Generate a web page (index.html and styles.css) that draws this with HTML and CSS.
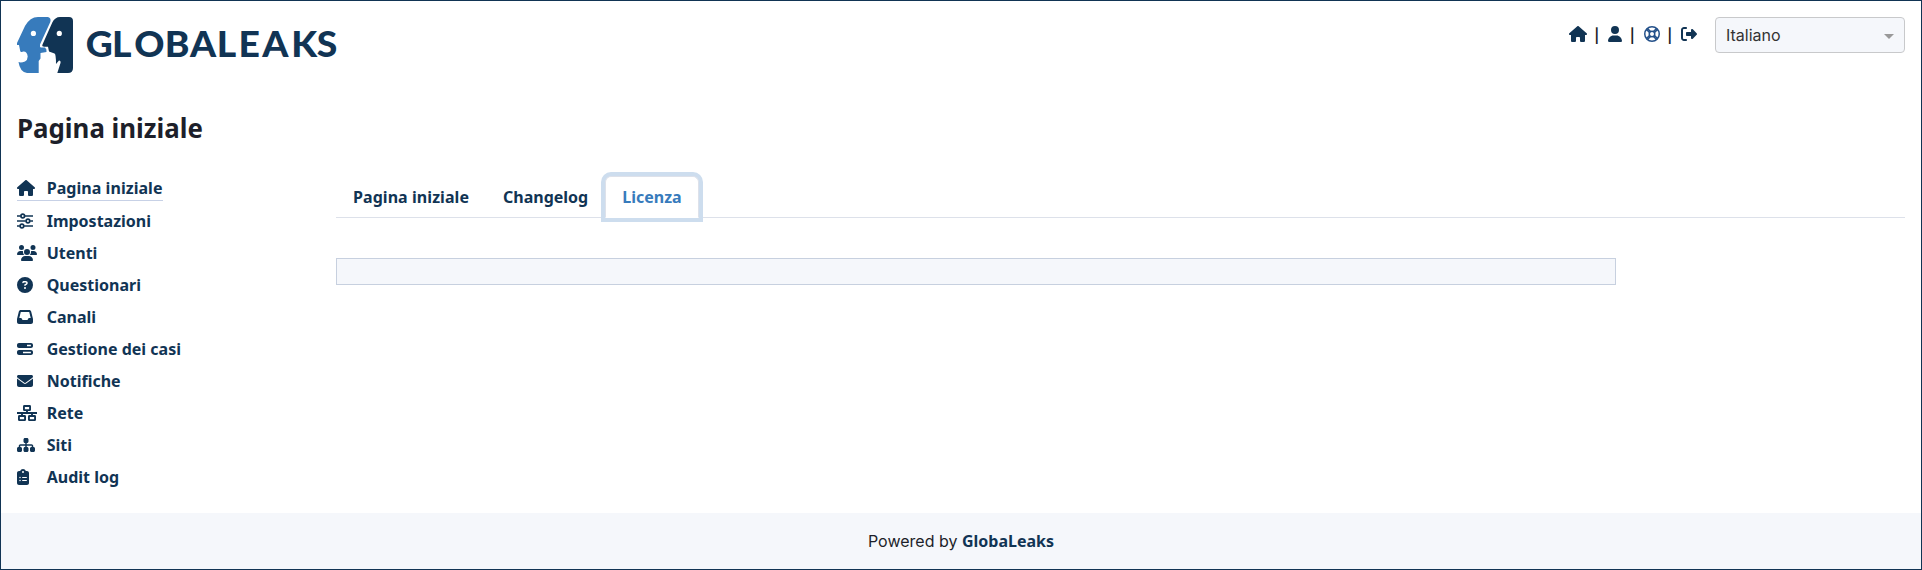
FILE: index.html
```html
<!DOCTYPE html>
<html lang="it">
<head>
<meta charset="utf-8">
<title>GlobaLeaks</title>
<link rel="stylesheet" href="styles.css">
</head>
<body>
<svg width="0" height="0" class="defs">
  <symbol id="house" viewBox="0 0 576 512"><path d="M575.8 255.5c0 18-15 32.1-32 32.1h-32l.7 160.2c0 2.700-.2 5.400-.5 8.100V472c0 22.100-17.900 40-40 40H456c-1.100 0-2.200 0-3.300-.1c-1.400 .1-2.800 .1-4.200 .1H416 392c-22.100 0-40-17.900-40-40V448 384c0-17.700-14.300-32-32-32H256c-17.700 0-32 14.300-32 32v64 24c0 22.100-17.900 40-40 40H160 128.100c-1.500 0-3-.1-4.500-.2c-1.200 .1-2.400 .2-3.600 .2H104c-22.100 0-40-17.900-40-40V360c0-.9 0-1.900 .1-2.800V287.600H32c-18 0-32-14-32-32.100c0-9 3-17 10-24L266.400 8c7-7 15-8 22-8s15 2 21 7L564.800 231.500c8 7 12 15 11 24z"/></symbol>
  <symbol id="user" viewBox="0 0 448 512"><path d="M224 256A128 128 0 1 0 224 0a128 128 0 1 0 0 256zm-45.700 48C79.800 304 0 383.800 0 482.300C0 498.700 13.300 512 29.700 512H418.300c16.400 0 29.700-13.300 29.700-29.700C448 383.800 368.200 304 269.700 304H178.300z"/></symbol>
  <symbol id="ring" viewBox="0 0 512 512"><g fill="none" stroke="currentColor" stroke-width="48"><circle cx="256" cy="256" r="232"/><circle cx="256" cy="256" r="88"/><path stroke-width="44" d="M78 112l106 106M112 78l106 106M400 78L294 184M434 112L328 218M78 400l106-106M112 434l106-106M400 434L294 328M434 400L328 294"/></g></symbol>
  <symbol id="logout" viewBox="0 0 512 512"><path d="M377.900 105.900L500.700 228.700c7.200 7.200 11.300 17.100 11.300 27.300s-4.100 20.100-11.300 27.300L377.900 406.100c-6.400 6.400-15 9.900-24 9.900c-18.700 0-33.900-15.200-33.900-33.900l0-62.100-128 0c-17.700 0-32-14.300-32-32l0-64c0-17.700 14.300-32 32-32l128 0 0-62.100c0-18.700 15.200-33.900 33.900-33.900c9 0 17.600 3.600 24 9.900zM160 96L96 96c-17.700 0-32 14.300-32 32l0 256c0 17.700 14.300 32 32 32l64 0c17.700 0 32 14.300 32 32s-14.300 32-32 32l-64 0c-53 0-96-43-96-96L0 128C0 75 43 32 96 32l64 0c17.700 0 32 14.300 32 32s-14.300 32-32 32z"/></symbol>
  <symbol id="sliders" viewBox="0 0 512 512"><g fill="none" stroke="currentColor" stroke-width="54"><path d="M0 96h120M248 96h264M0 256h280M420 256h92M0 416h92M226 416h286"/><circle cx="184" cy="96" r="58"/><circle cx="350" cy="256" r="58"/><circle cx="158" cy="416" r="58"/></g></symbol>
  <symbol id="users" viewBox="0 0 640 512"><path d="M144 0a80 80 0 1 1 0 160A80 80 0 1 1 144 0zM512 0a80 80 0 1 1 0 160A80 80 0 1 1 512 0zM0 298.700C0 239.800 47.800 192 106.700 192h42.700c15.900 0 31 3.500 44.600 9.700c-1.300 7.200-1.900 14.700-1.900 22.300c0 38.200 16.800 72.500 43.300 96H21.300C9.600 320 0 310.400 0 298.700zM405.300 320h-.7c26.600-23.500 43.300-57.800 43.300-96c0-7.600-.7-15-1.900-22.300c13.600-6.300 28.700-9.700 44.600-9.700h42.700C592.200 192 640 239.800 640 298.700c0 11.800-9.600 21.300-21.300 21.300H405.300zM224 224a96 96 0 1 1 192 0 96 96 0 1 1-192 0zM128 485.300C128 411.700 187.700 352 261.300 352H378.700C452.300 352 512 411.700 512 485.300c0 14.700-11.900 26.700-26.700 26.700H154.700c-14.700 0-26.700-11.900-26.700-26.700z"/></symbol>
  <symbol id="question" viewBox="0 0 512 512"><path d="M256 512A256 256 0 1 0 256 0a256 256 0 1 0 0 512zM169.800 165.300c7.900-22.300 29.100-37.300 52.800-37.300h58.300c34.900 0 63.100 28.300 63.100 63.100c0 22.600-12.100 43.500-31.700 54.800L280 264.400c-.2 13-10.900 23.600-24 23.600c-13.300 0-24-10.700-24-24V250.500c0-8.600 4.600-16.500 12.100-20.800l44.300-25.400c4.700-2.700 7.600-7.700 7.600-13.100c0-8.400-6.800-15.100-15.100-15.100H222.600c-3.400 0-6.400 2.100-7.500 5.300l-.4 1.200c-4.400 12.500-18.200 19-30.600 14.600s-19-18.200-14.600-30.600l.4-1.200zM224 352a32 32 0 1 1 64 0 32 32 0 1 1-64 0z"/></symbol>
  <symbol id="inbox" viewBox="0 0 512 512"><path d="M121 32C91.600 32 66 52 58.900 80.500L1.900 308.400C.6 313.500 0 318.700 0 323.900V416c0 35.300 28.700 64 64 64H448c35.300 0 64-28.700 64-64V323.900c0-5.200-.6-10.400-1.900-15.500l-57-227.900C446 52 420.400 32 391 32H121zm0 64H391l48 192H387.800c-12.100 0-23.200 6.800-28.600 17.700l-14.300 28.600c-5.400 10.800-16.500 17.700-28.600 17.700H195.800c-12.100 0-23.200-6.800-28.600-17.700l-14.300-28.600c-5.400-10.800-16.500-17.700-28.600-17.700H73L121 96z"/></symbol>
  <symbol id="progress" viewBox="0 0 512 512"><path fill-rule="evenodd" d="M64 64h384c35 0 64 29 64 64v32c0 35-29 64-64 64H64c-35 0-64-29-64-64v-32c0-35 29-64 64-64zm256 54v52h124V118zM64 288h384c35 0 64 29 64 64v32c0 35-29 64-64 64H64c-35 0-64-29-64-64v-32c0-35 29-64 64-64zm128 54v52h252V342z"/></symbol>
  <symbol id="envelope" viewBox="0 0 512 512"><path d="M48 64C21.500 64 0 85.500 0 112c0 15.100 7.100 29.300 19.200 38.400L236.800 313.600c11.400 8.500 27 8.500 38.400 0L492.800 150.400c12.100-9.100 19.200-23.300 19.200-38.400c0-26.500-21.500-48-48-48H48zM0 176V384c0 35.300 28.700 64 64 64H448c35.300 0 64-28.700 64-64V176L294.400 339.200c-22.800 17.100-54 17.100-76.800 0L0 176z"/></symbol>
  <symbol id="network" viewBox="0 0 640 512"><g fill="none" stroke="currentColor" stroke-width="60" stroke-linejoin="round"><rect x="222" y="30" width="196" height="132" rx="14"/><rect x="62" y="350" width="196" height="132" rx="14"/><rect x="382" y="350" width="196" height="132" rx="14"/><path d="M0 256h640M320 162v94M160 256v94M480 256v94"/></g></symbol>
  <symbol id="sitemap" viewBox="0 0 576 512"><path d="M208 80c0-26.500 21.500-48 48-48h64c26.500 0 48 21.500 48 48v64c0 26.500-21.500 48-48 48h-8v40H464c30.900 0 56 25.100 56 56v32h8c26.500 0 48 21.500 48 48v64c0 26.500-21.500 48-48 48H464c-26.500 0-48-21.500-48-48V368c0-26.500 21.500-48 48-48h8V288c0-4.400-3.600-8-8-8H312v40h8c26.500 0 48 21.500 48 48v64c0 26.500-21.500 48-48 48H256c-26.500 0-48-21.500-48-48V368c0-26.500 21.500-48 48-48h8V280H112c-4.400 0-8 3.600-8 8v32h8c26.500 0 48 21.500 48 48v64c0 26.500-21.500 48-48 48H48c-26.500 0-48-21.500-48-48V368c0-26.500 21.500-48 48-48h8V288c0-30.900 25.100-56 56-56H264V192h-8c-26.500 0-48-21.500-48-48V80z"/></symbol>
  <symbol id="clipboard" viewBox="0 0 384 512"><path d="M192 0c-41.800 0-77.400 26.700-90.500 64H64C28.700 64 0 92.700 0 128V448c0 35.300 28.700 64 64 64H320c35.300 0 64-28.700 64-64V128c0-35.300-28.700-64-64-64H282.500C269.400 26.700 233.800 0 192 0zm0 64a32 32 0 1 1 0 64 32 32 0 1 1 0-64zM72 272a24 24 0 1 1 48 0 24 24 0 1 1-48 0zm104-16H304c8.800 0 16 7.200 16 16s-7.200 16-16 16H176c-8.800 0-16-7.200-16-16s7.200-16 16-16zM72 368a24 24 0 1 1 48 0 24 24 0 1 1-48 0zm88 0c0-8.800 7.200-16 16-16H304c8.800 0 16 7.200 16 16s-7.200 16-16 16H176c-8.800 0-16-7.200-16-16z"/></symbol>
</svg>
<div class="page">
  <header class="header">
    <svg class="logo" viewBox="0 0 322 56" width="322" height="56">
      <path fill="#377bbc" d="M21 0H31Q34.500 1 33.300 5L23 27.500Q22.500 30 24 30.500H28Q30 32 29.500 35L23.500 36V41.500L21.700 44V56H10Q3 55 1.500 45Q4 46 8 44.500Q10.700 43 10.700 39.500Q10 34 6 34.500Q3 36 3 33L2 28H0V26L8 9Q13 0 21 0Z"/>
      <path fill="#113454" d="M43 0H52Q56 0 56 4V51Q56 56 51 56H40.300L43.500 46Q44 43.500 42 43.500L39 47Q39 37 37.500 36.500L32 34.500L31 29.700H28Q24.500 30 25.500 27.500L35.300 5.500Q38 0 43 0Z"/>
      <circle cx="16.400" cy="16.400" r="2.600" fill="#fff"/><circle cx="42.300" cy="16.400" r="2.600" fill="#fff"/>
      <text class="wordmark" transform="scale(1.05 1)" x="65.600 90.500 111.600 140.700 164.800 190.200 211 233.600 261.300 285.600" y="40.500">GLOBALEAKS</text>
    </svg>
    <div class="tools">
      <nav class="actions">
        <svg class="i18"><use href="#house"/></svg><span class="sep">|</span>
        <svg class="i14"><use href="#user"/></svg><span class="sep">|</span>
        <svg class="i16 help"><use href="#ring"/></svg><span class="sep">|</span>
        <svg class="i16"><use href="#logout"/></svg>
      </nav>
      <div class="select"><span>Italiano</span><i class="arrow"></i></div>
    </div>
  </header>
  <h1 class="title">Pagina iniziale</h1>
  <div class="main">
    <nav class="menu">
      <a class="item active"><span class="ico"><svg class="i18"><use href="#house"/></svg></span>Pagina iniziale</a>
      <a class="item"><span class="ico"><svg class="i16"><use href="#sliders"/></svg></span>Impostazioni</a>
      <a class="item"><span class="ico"><svg class="i20"><use href="#users"/></svg></span>Utenti</a>
      <a class="item"><span class="ico"><svg class="i16"><use href="#question"/></svg></span>Questionari</a>
      <a class="item"><span class="ico"><svg class="i16"><use href="#inbox"/></svg></span>Canali</a>
      <a class="item"><span class="ico"><svg class="i16"><use href="#progress"/></svg></span>Gestione dei casi</a>
      <a class="item"><span class="ico"><svg class="i16"><use href="#envelope"/></svg></span>Notifiche</a>
      <a class="item"><span class="ico"><svg class="i20"><use href="#network"/></svg></span>Rete</a>
      <a class="item"><span class="ico"><svg class="i18"><use href="#sitemap"/></svg></span>Siti</a>
      <a class="item"><span class="ico"><svg class="i12"><use href="#clipboard"/></svg></span>Audit log</a>
    </nav>
    <section class="content">
      <div class="tabs"><a class="tab">Pagina iniziale</a><a class="tab">Changelog</a><a class="tab current">Licenza</a></div>
      <div class="license"></div>
    </section>
  </div>
  <footer class="footer"><span>Powered by <b>GlobaLeaks</b></span></footer>
</div>
</body>
</html>
```
FILE: styles.css
```css
* { box-sizing: border-box; }
body { margin: 0; font: 16px/24px Inter, sans-serif; color: #1d1f2a; }
svg { display: block; fill: currentColor; height: 16px; flex: none; }
.defs { display: none; }
.page { height: 570px; border: 1px solid #113454; display: flex; flex-direction: column; background: #fff; }
.i12 { width: 12px; } .i14 { width: 14px; } .i16 { width: 16px; } .i18 { width: 18px; } .i20 { width: 20px; }
.header { display: flex; justify-content: space-between; padding: 16px 16px 0; }
.logo { height: 56px; }
.wordmark { font: 900 35.500px Lato, sans-serif; fill: #113454; }
.tools { display: flex; align-items: flex-start; }
.actions { display: flex; align-items: center; height: 34px; margin-right: 18px; color: #113454; }
.sep { width: 21.500px; text-align: center; color: #1d1f2a; font: 600 14px/24px Inter, sans-serif; padding: 3px 1px 0 0; }
.help { color: #24518a; }
.select { width: 190px; height: 36px; border: 1px solid #c8c9cb; border-radius: 4px; background: #f5f7fb; display: flex; align-items: center; justify-content: space-between; padding: 0 10px; color: #333; }
.arrow { border: 5px solid transparent; border-top-color: #999; border-bottom: 0; margin-top: 3px; }
.title { font: 700 25.850px/32px "Noto Sans", sans-serif; margin: 39px 16px 0; }
.main { display: flex; flex: 1; padding: 31px 16px 0; }
.menu { width: 319px; flex: none; display: flex; flex-direction: column; align-items: flex-start; font: 700 16px/24px "Noto Sans", sans-serif; color: #113454; }
.item { display: flex; align-items: center; height: 24px; margin-bottom: 8px; }
.active { height: 26px; border-bottom: 1px solid #c7d1e6; padding-top: 1px; letter-spacing: .05px; }
.ico { width: 29.700px; }
.content { flex: 1; }
.tabs { display: flex; height: 43px; border-bottom: 1px solid #dde1ea; font: 700 16px/24px "Noto Sans", sans-serif; color: #113454; }
.tab { height: 42px; padding: 8px 16px; border: 1px solid transparent; margin-top: 1px; }
.tab:first-child { letter-spacing: .06px; }
.current { color: #377bbc; background: #fff; border: 1px solid #dde1ea; border-bottom-color: #fff; border-radius: 6px 6px 0 0; box-shadow: 0 0 0 4px #cdddee; }
.license { width: 1280px; height: 27px; margin-top: 40px; border: 1px solid #c7d0df; background: #f5f7fb; }
.footer { height: 56px; flex: none; display: flex; justify-content: center; align-items: center; background: #f5f7fb; padding-bottom: 1px; }
.footer b { font-family: "Noto Sans", sans-serif; color: #113454; }
```
